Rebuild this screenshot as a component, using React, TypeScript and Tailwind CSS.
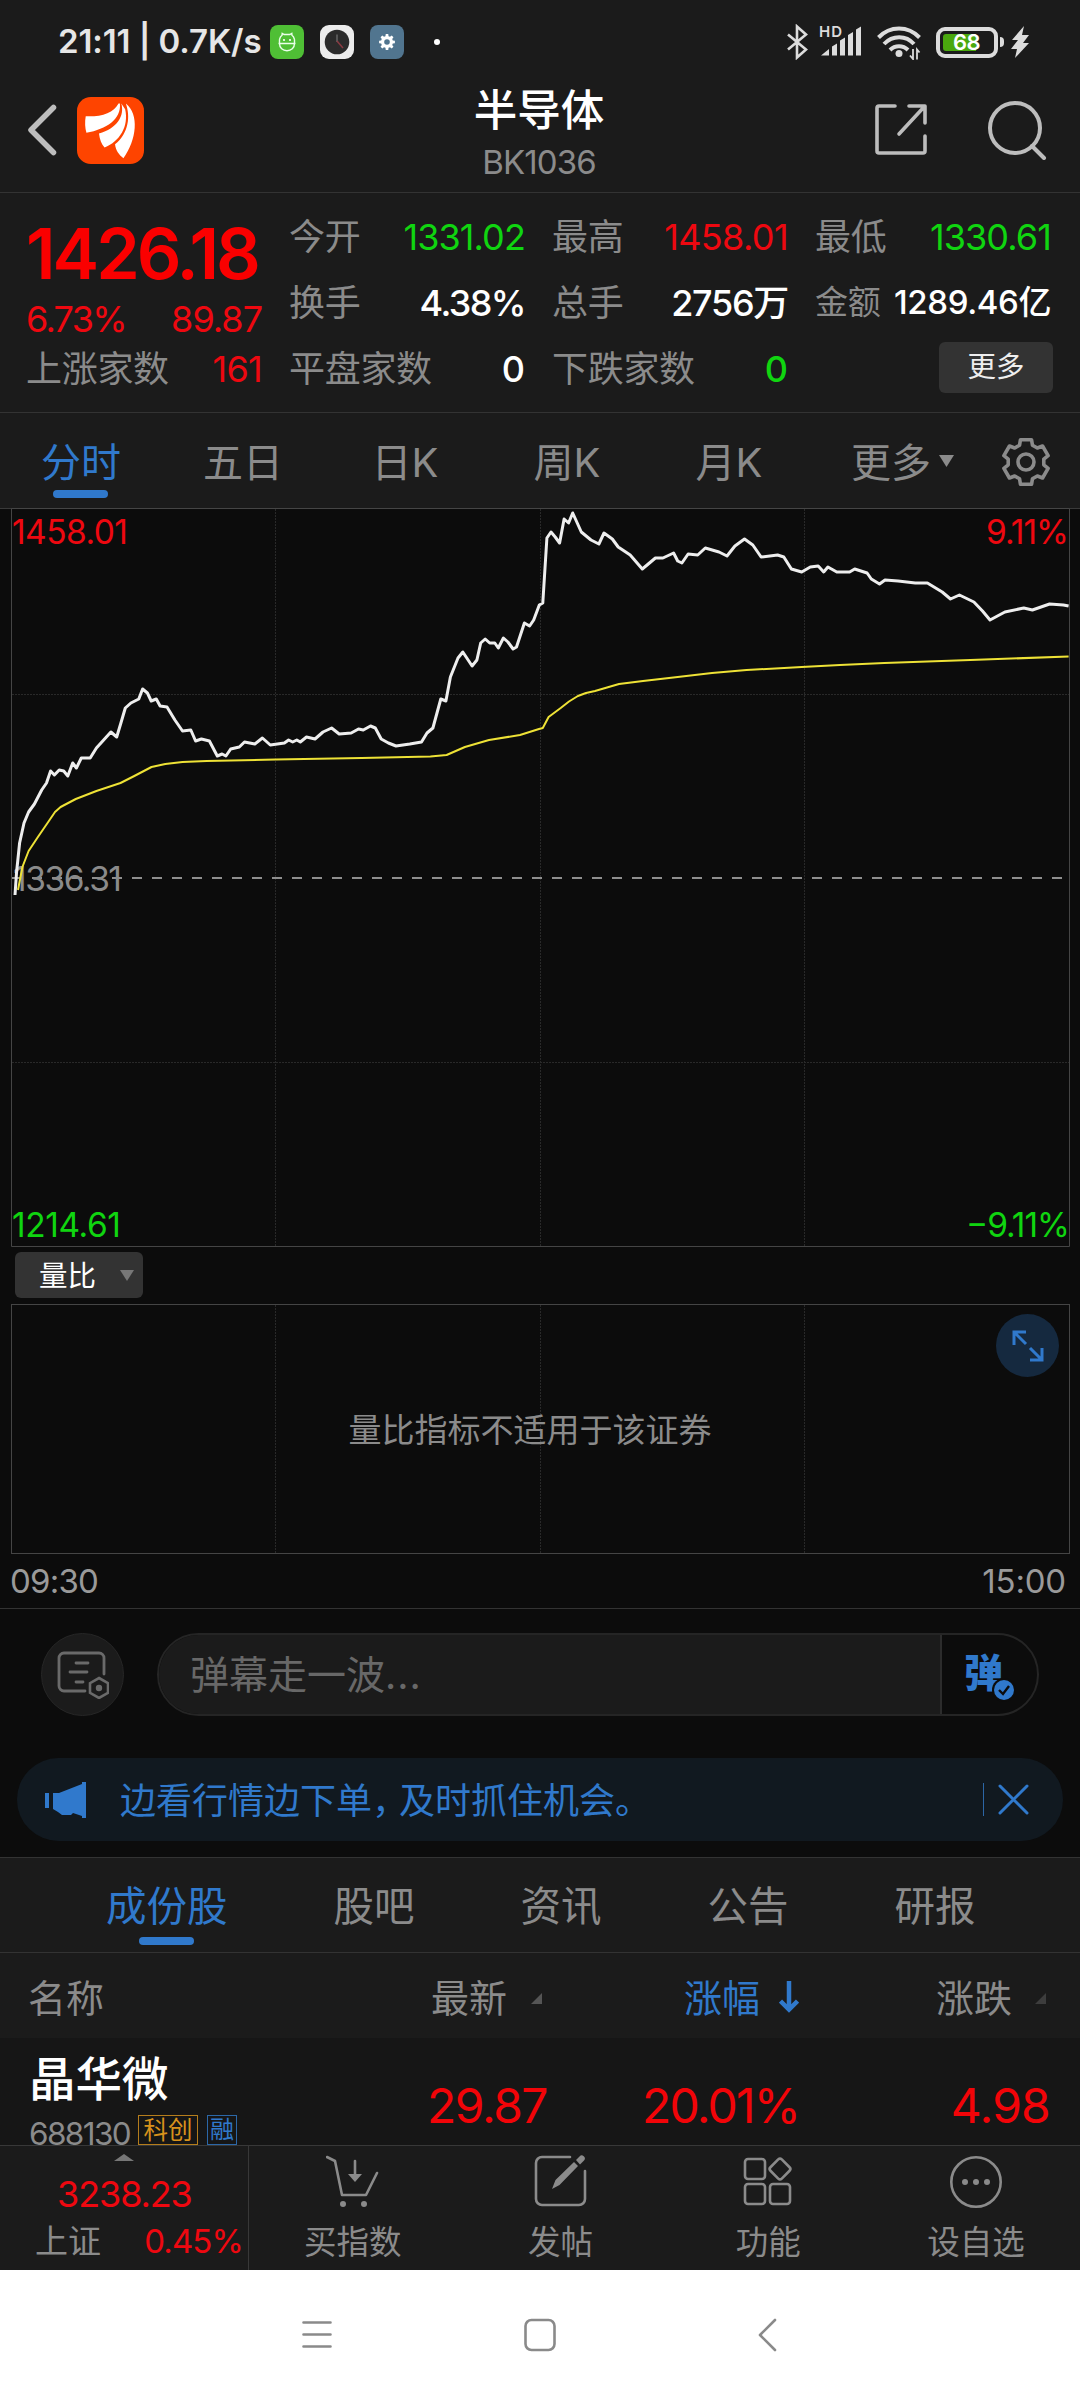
import React from 'react'
import clsx from 'clsx'

// Outline of a cog: outer radius r1 on the teeth, r2 in the valleys
const cogPath = (teeth: number, r1: number, r2: number, outer: number, inner: number) => {
  const pts: string[] = []
  for (let i = 0; i < teeth; i++) {
    const base = (360 / teeth) * i
    const steps: [number, number][] = [[-inner, r2], [-outer, r1], [outer, r1], [inner, r2]]
    steps.forEach(([deg, r]) => {
      const a = ((base + deg) * Math.PI) / 180
      pts.push(`${(Math.sin(a) * r).toFixed(2)} ${(-Math.cos(a) * r).toFixed(2)}`)
    })
  }
  return `M${pts.join('L')}Z`
}

const PRICE_LINE =
  '15,895 16.5,873 19.6,843 24,823 28.6,812 34.4,804 41.7,790 46.5,783 50.6,771 54.4,775 59.2,770 63.7,771 67.8,776 72.7,763 76.4,768 81.3,758 90.2,758 96.4,748 110.9,732 116.7,737 120.9,723 125.3,708 130.9,703 138.8,699 142.6,689 147.4,693 151.2,701 156.3,699 160.1,706 167,707 174.9,720 182.5,731 190.8,730 195.6,741 201.4,739 209.4,741 217.3,756 222.1,754 225.9,756 230.7,749 239.3,747 244.5,742 254.8,744 262.4,738 270.3,745 284.4,743 288.6,740 292.7,742 296.8,740 300.3,742 306.5,737 315,739 323,732 331.6,728 339.2,734 351.2,733 358.5,729 363.3,730 370.5,726 375.3,728 381.2,739 388.4,743 396,746 409.8,744 421.5,742 427,733 432.9,728 440.8,699 445.9,701 450.4,677 458,658 462.8,652 472.1,666 476.9,660 480.7,643 485.2,639 489.7,643 494.8,643 498.3,648 503.4,638 507.9,642 513.1,649 516.5,647 524.4,623 529.6,626 533.7,620 539.3,605 542.8,603 546.9,538 551,532 555.2,537 559.6,543 564.1,519 568.6,523 572.7,513 581.3,532 591,540 598.9,544 604,533 612.3,539 618.2,547 630.2,555 642.3,569 655.4,558 662.9,558 673.6,553 677.7,561 681.9,563 688.1,554 697.7,555 705.3,548 719,552 727,556 734.9,546 744.5,539 752.8,545 761.1,557 777.6,555 783.8,557 791.4,569 801.7,572 810.3,567 818.2,566 823.7,572 827.9,567 836.8,572 849.6,572 854.7,569 867.1,573 871.3,579 879.5,584 885,580 898.1,581 915.3,583 927.4,583 942.2,592 950.5,599 959.4,595 973.9,602 982.5,611 990,620 1004.9,612 1023.8,608 1032.4,610 1049.6,604 1063.4,605 1068.6,606'

const AVG_LINE =
  '18,890 22.4,867 28.6,851 37.9,837 48.2,822 55,812 60.6,807 75.8,799 96.4,791 120.5,783 134.3,776 151.5,767 165.3,764 182.5,762 206.6,761 275.5,759.5 361.6,758 430.4,756.5 446.6,755 464.9,747 489,740 520,735 539,729 542.8,728 548.6,717 560.7,708 569,701.5 577.9,696 586,693 595,691 607,687.5 619,684 631,682.5 643,681 677.7,677 712,673 746.6,670 801.7,667 840,665 884.4,663 970.4,660 1068.6,656.5'

// ---------- Status bar ----------
function StatusBar() {
  return (
    <div className="flex h-[84px] items-center pl-[58px] pr-[50px] text-[#e6e6e6]">
      <span className="w-[205px] whitespace-nowrap text-[33px] font-semibold tracking-[-0.1px]">21:11 | 0.7K/s</span>
      <svg className="ml-[7px] h-[34px] w-[34px]" viewBox="0 0 34 34" fill="none">
        <rect width="34" height="34" rx="8" fill="#4fbf35" />
        <path d="M9.5 14.5c.5-2 1.5-3.500 2.500-4.200l.2-2 2 1.200h5.600l2-1.200.2 2c1 .7 2 2.200 2.500 4.200M8.500 18.500h17M9.500 18.500c0 4.500 3.300 7.300 7.500 7.300s7.500-2.800 7.500-7.300v-4M9.500 18.500v-4" stroke="#eaffea" strokeWidth="1.400" />
        <circle cx="14" cy="15" r="1.100" fill="#fff" />
        <circle cx="20" cy="15" r="1.100" fill="#fff" />
      </svg>
      <svg className="ml-4 h-[34px] w-[34px]" viewBox="0 0 34 34" fill="none">
        <rect width="34" height="34" rx="9" fill="#ececec" />
        <circle cx="17" cy="17" r="12.300" fill="#2b2b2b" />
        <path d="M17 9.500V17" stroke="#666" strokeWidth="1.500" />
        <path d="M17 16l6 7" stroke="#8a3a42" strokeWidth="1.500" />
      </svg>
      <svg className="ml-4 h-[34px] w-[34px]" viewBox="-17 -17 34 34" fill="none">
        <rect x="-17" y="-17" width="34" height="34" rx="8" fill="#51758f" />
        <path d={cogPath(8, 8, 6, 9, 15)} fill="#fff" />
        <circle r="2.800" fill="#51758f" />
      </svg>
      <span className="ml-[30px] h-[6px] w-[6px] rounded-full bg-white" />

      <div className="ml-auto flex items-center">
        <svg className="h-9 w-[22px]" viewBox="0 0 22 36" fill="none" stroke="#dcdcdc" strokeWidth="2.600">
          <path d="M2 10.500L20 25.500L11 33.500V2.500L20 10.500L2 25.500" />
        </svg>
        <svg className="ml-[11px] h-9 w-[44px]" viewBox="0 0 44 36" fill="#dcdcdc">
          <text x="0" y="13" fontSize="15" fontWeight="600" textLength="23">HD</text>
          <path d="M2 31.500L10 25v6.500zM13 22.500l5-3v12h-5zM21 16.500l5-3v18h-5zM29 11l5-3v23.500h-5zM37 5.500l5-3v29h-5z" />
        </svg>
        <svg className="ml-[14px] h-9 w-[44px]" viewBox="0 0 44 36" fill="none" stroke="#dcdcdc" strokeWidth="4">
          <path d="M1.500 13.500C13 1.500 31 1.500 42.500 13.500M7 20c8.500-9 22-9 30 0M13 26c5-5 13-5 18 0" />
          <circle cx="22" cy="29.500" r="3.500" fill="#dcdcdc" stroke="none" />
          <path d="M36 25v10l-3-3.500M40 35.500v-10l2.500 3" strokeWidth="1.800" />
        </svg>
        <div className="ml-[15px] flex h-[31px] w-[62px] rounded-[9px] border-4 border-[#dcdcdc] p-[3px]">
          <div className="relative h-full w-[33px] rounded-l-[3px] bg-[#4aa80e]">
            <span className="absolute left-[10px] top-[-4px] text-[22px] font-semibold leading-6 tracking-[-0.5px] text-white">68</span>
          </div>
        </div>
        <span className="ml-[2px] h-[10px] w-[4px] rounded-r bg-[#dcdcdc]" />
        <svg className="ml-[7px] h-[32px] w-[19px]" viewBox="0 0 19 32" fill="#dcdcdc">
          <path d="M13 0L1 14h6L0 23h6L4 32 18 17h-6l6-8h-7z" />
        </svg>
      </div>
    </div>
  )
}

// ---------- Title bar ----------
function Header() {
  return (
    <header className="grid h-[109px] grid-cols-3 border-b border-[#333] pl-7 pr-[33px]">
      <div className="flex items-center gap-[20px] pb-4">
        <svg className="h-[52px] w-[29px]" viewBox="0 0 29 52" fill="none" stroke="#bdbdbd" strokeWidth="5.500" strokeLinecap="round" strokeLinejoin="round">
          <path d="M25.500 3.500L3 26l22.500 22.500" />
        </svg>
        <svg className="h-[67px] w-[67px]" viewBox="225 294 192 198" preserveAspectRatio="none">
          <rect x="225" y="294" width="192" height="198" rx="40" fill="#fe4400" />
          <path d="M344 313C330 341 295 353 250 351C247 368 248 386 252 400C310 388 352 360 348 313Z" fill="#fff" />
          <path d="M352 313C362 350 340 386 288 402C290 420 295 434 304 443C348 425 374 380 363 330Z" fill="#fff" />
          <path d="M365 313C378 350 374 400 334 434C336 452 345 465 358 475C396 420 404 345 365 313Z" fill="#fff" />
        </svg>
      </div>
      <div className="flex flex-col items-center pl-[3px] pt-px">
        <h1 className="text-[43.500px] font-medium leading-[50px] text-white">半导体</h1>
        <p className="text-[33px] leading-[55px] tracking-[-0.900px] text-[#8b8b8b]">BK1036</p>
      </div>
      <div className="flex items-center justify-end gap-[60px] pb-4">
        <svg className="h-[54px] w-[54px]" viewBox="0 0 54 54" fill="none" stroke="#bdbdbd" strokeWidth="3.600" strokeLinecap="round" strokeLinejoin="round">
          <path d="M21 3H5a2 2 0 0 0-2 2v43a2 2 0 0 0 2 2h44a2 2 0 0 0 2-2V33M35 3h16v17M50 4L25 31" />
        </svg>
        <svg className="h-[60px] w-[59px]" viewBox="0 0 59 60" fill="none" stroke="#bdbdbd" strokeWidth="4" strokeLinecap="round">
          <circle cx="27" cy="28" r="25" />
          <path d="M44 46l12 12" />
        </svg>
      </div>
    </header>
  )
}

// ---------- Quote ----------
type QuoteItem = { label: string; value: string; color: string; small?: boolean }

const quote: QuoteItem[] = [
  { label: '今开', value: '1331.02', color: 'text-[#10d510] tracking-[-0.900px]' },
  { label: '最高', value: '1458.01', color: 'text-[#ee0810] tracking-[-0.600px]' },
  { label: '最低', value: '1330.61', color: 'text-[#10d510] tracking-[-0.900px]' },
  { label: '换手', value: '4.38%', color: 'text-white font-medium tracking-[-1.600px]' },
  { label: '总手', value: '2756万', color: 'text-white font-medium tracking-[-1.300px]' },
  { label: '金额', value: '1289.46亿', color: 'text-white font-medium tracking-[-0.400px]', small: true },
  { label: '上涨家数', value: '161', color: 'text-[#ee0810] tracking-[-0.700px]' },
  { label: '平盘家数', value: '0', color: 'text-white font-medium' },
  { label: '下跌家数', value: '0', color: 'text-[#10d510] font-medium' },
]

function Quote() {
  return (
    <section className="grid h-[220px] grid-cols-4 grid-rows-[66px_66px_66px] gap-x-[27px] border-b border-[#333] pl-[26px] pr-[29px] pt-[11px]">
      <div className="row-span-2 whitespace-nowrap text-[#ee0810]">
        <div className="text-[70px] font-semibold leading-[100px] tracking-[-3px] text-[#fa0000]">1426.18</div>
        <div className="flex justify-between text-[36px] leading-[30px] tracking-[-1.700px]">
          <span>6.73%</span>
          <span className="tracking-[-1px]">89.87</span>
        </div>
      </div>
      {quote.map((q) => (
        <div key={q.label} className={clsx('flex items-center justify-between whitespace-nowrap', q.small ? 'text-[33px]' : 'text-[36px]')}>
          <span className="tracking-[-0.300px] text-[#8b8b8b]">{q.label}</span>
          <span className={q.color}>{q.value}</span>
        </div>
      ))}
      <div className="flex items-center justify-end pb-1">
        <button className="mr-[-2px] h-[51px] w-[114px] rounded-md bg-[#333] text-[28.500px] text-[#eee]">更多</button>
      </div>
    </section>
  )
}

const periods = ['分时', '五日', '日K', '周K', '月K']

function PeriodTabs() {
  return (
    <nav className="flex h-[95px] text-[40px] text-[#8b8b8b]">
      {periods.map((p, i) => (
        <div key={p} className={clsx('relative flex w-[162px] items-center justify-center pt-[5px]', i === 0 && 'text-[#3079cc]')}>
          {p}
          {i === 0 && <span className="absolute bottom-[10px] left-[53px] h-2 w-[55px] rounded-full bg-[#3079cc]" />}
        </div>
      ))}
      <div className="flex items-center gap-2 pl-[41px] pt-[5px]">
        更多
        <svg className="-mt-1 h-3 w-[15px]" viewBox="0 0 15 12" fill="#8b8b8b"><path d="M0 0h15L7.500 12z" /></svg>
      </div>
      <svg className="ml-auto mr-[29px] mt-[24px] h-[50px] w-[50px]" viewBox="-25 -25 50 50" fill="none" stroke="#8b8b8b" strokeWidth="3.600" strokeLinejoin="round">
        <path d={cogPath(6, 23, 18, 14, 21)} />
        <circle r="8" />
      </svg>
    </nav>
  )
}

// ---------- Charts ----------
function Charts() {
  return (
    <section className="bg-[#0c0c0c]">
      <svg className="block h-[740px] w-[1080px]" viewBox="0 508 1080 740" fill="none">
        <path d="M0 508.500H1080" stroke="#3a3a3a" />
        <path d="M11.500 508.500H1069.500V1246.500H11.500Z" stroke="#454545" />
        <path d="M275.500 509V1246M540.500 509V1246M804.500 509V1246M12 694.500H1069M12 1062.500H1069" stroke="#292929" strokeDasharray="2 1" />
        <path d="M12 878H1064" stroke="#8f8f8f" strokeWidth="2" strokeDasharray="10 10" />
        <g fontSize="33.500">
          <text x="12" y="544" fill="#ee0810" textLength="116">1458.01</text>
          <text x="986" y="544" fill="#ee0810" textLength="83">9.11%</text>
          <text x="13" y="891" fill="#8b8b8b" textLength="109">1336.31</text>
          <text x="12" y="1237" fill="#10d510" textLength="109">1214.61</text>
          <text x="966" y="1237" fill="#10d510" textLength="104">−9.11%</text>
        </g>
        <polyline points={AVG_LINE} stroke="#eee236" strokeWidth="2" strokeLinejoin="round" />
        <polyline points={PRICE_LINE} stroke="#eee" strokeWidth="3" strokeLinejoin="round" />
      </svg>

      <div className="flex h-[56px] pl-[15px] pt-1">
        <div className="flex h-[46px] w-[128px] items-center rounded-md bg-[#333] pl-6 pt-0.5 text-[28.500px] text-white">
          量比
          <svg className="-mt-0.5 ml-[24px] h-[11px] w-[14px]" viewBox="0 0 14 11" fill="#777"><path d="M0 0h14L7 11z" /></svg>
        </div>
      </div>

      <div className="relative mx-[11px] h-[250px] w-[1059px] border border-[#454545]">
        <svg className="absolute inset-0" width="1057" height="248" viewBox="12 1305 1057 248" stroke="#292929" strokeDasharray="2 1">
          <path d="M275.500 1305V1553M540.500 1305V1553M804.500 1305V1553" />
        </svg>
        <p className="absolute left-0 top-[99px] w-[1036px] text-center text-[33px] leading-[52px] text-[#8b8b8b]">量比指标不适用于该证券</p>
        <div className="absolute right-[10px] top-[9px] flex h-[63px] w-[63px] items-center justify-center rounded-full bg-[#15293f]">
          <svg className="h-8 w-8" viewBox="0 0 32 32" fill="none" stroke="#3079cc" strokeWidth="3">
            <path d="M2 15V2h12M2.500 2.500L14 14M30 18v12H18M29.500 29.500L18 18" />
          </svg>
        </div>
      </div>

      <div className="flex h-[55px] items-center justify-between border-b border-[#333] pl-[10px] pr-[14px] pt-0.5 text-[33px] tracking-[-0.800px] text-[#9a9a9a]">
        <span>09:30</span>
        <span className="tracking-[-0.200px]">15:00</span>
      </div>
    </section>
  )
}

// ---------- Danmaku input and trade hint ----------
function Danmaku() {
  return (
    <section className="h-[249px] border-b border-[#333] bg-[#0c0c0c] pt-6">
      <div className="flex pl-[41px]">
        <div className="flex h-[83px] w-[83px] items-center justify-center rounded-full border border-[#262626] bg-[#1b1b1b]">
          <svg className="h-[48px] w-[52px]" viewBox="0 0 52 48" fill="none" stroke="#6a6a6a" strokeWidth="2.800" strokeLinecap="round">
            <path d="M28 39H7a5 5 0 0 1-5-5V6a5 5 0 0 1 5-5h35a5 5 0 0 1 5 5v16M19 11h12M13 20h17M19 30h7" transform="translate(0 1)" />
            <path d="M42 27l9 5.200v9.600L42 47l-9-5.200v-9.600z" strokeWidth="2.600" />
            <circle cx="42" cy="37" r="1.800" fill="#6a6a6a" />
          </svg>
        </div>
        <div className="ml-[33px] flex h-[83px] w-[882px] overflow-hidden rounded-full border-2 border-[#252525]">
          <div className="flex w-[783px] items-center border-r-2 border-[#2c2c2c] bg-[#1b1b1b] pl-[31px] pt-0.5 text-[39px] text-[#686868]">
            弹幕走一波<span className="tracking-[1px]">...</span>
          </div>
          <div className="relative flex-1 pl-[22px] pt-[16px] text-[39px] font-black leading-[44px] text-[#3079cc]">
            弹
            <svg className="absolute left-[50px] top-[43px] h-6 w-6" viewBox="0 0 24 24" fill="none">
              <circle cx="12" cy="12" r="12" fill="#0c0c0c" />
              <circle cx="12" cy="12" r="10" fill="#3079cc" />
              <path d="M7 12l4 4 6-8" stroke="#0c0c0c" strokeWidth="2.400" />
            </svg>
          </div>
        </div>
      </div>

      <div className="mx-[17px] mt-[42px] flex h-[83px] items-center rounded-full bg-[#111920] text-[#3079cc]">
        <svg className="ml-7 h-9 w-[42px]" viewBox="0 0 42 36" fill="#3079cc">
          <path d="M0 11h4v15H0zM8 11h6L37 2V0h4v36h-4v-2l-9-3-2 2h-9l-4-3-5-3z" />
        </svg>
        <p className="ml-[33px] whitespace-nowrap pt-0.5 text-[36px]">
          边看行情边下单<span className="tracking-[-9px]">，</span>及时抓住机会。
        </p>
        <span className="ml-auto h-[33px] w-[1.500px] bg-[#2c66a6]" />
        <svg className="ml-[14px] mr-[34px] h-[31px] w-[31px]" viewBox="0 0 31 31" stroke="#3079cc" strokeWidth="3" strokeLinecap="round">
          <path d="M2 2l27 27M29 2L2 29" />
        </svg>
      </div>
    </section>
  )
}

// ---------- Constituents ----------
const sections = ['成份股', '股吧', '资讯', '公告', '研报']

function SortMark({ className }: { className?: string }) {
  return (
    <svg className={clsx('h-[11px] w-[11px]', className)} viewBox="0 0 11 11" fill="currentColor">
      <path d="M11 0v11H0z" />
    </svg>
  )
}

function Constituents() {
  return (
    <section>
      <nav className="flex h-[95px] items-center gap-[106px] border-b border-[#333] pl-[106px] pt-[5px] text-[40.500px] text-[#8b8b8b]">
        {sections.map((s, i) => (
          <div key={s} className={clsx('relative whitespace-nowrap', i === 0 && 'text-[#3079cc]')}>
            {s}
            {i === 0 && <span className="absolute -bottom-[7px] left-[33px] h-2 w-[55px] rounded-full bg-[#3079cc]" />}
          </div>
        ))}
      </nav>
      <div className="flex h-[85px] items-center pl-[28px] pt-[5px] text-[38px] text-[#8b8b8b]">
        <span className="w-[403px]">名称</span>
        <span>最新</span>
        <SortMark className="ml-[24px] text-[#555]" />
        <span className="ml-auto flex items-center text-[#3079cc]">
          涨幅
          <svg className="-mt-[3px] ml-[19px] h-8 w-5" viewBox="0 0 20 32" fill="none" stroke="#3079cc" strokeWidth="4.500">
            <path d="M10 0v28M1.500 20l8.500 8.500 8.500-8.500" />
          </svg>
        </span>
        <span className="ml-[137px]">涨跌</span>
        <SortMark className="ml-[23px] mr-[34px] text-[#3d3d3d]" />
      </div>
      <div className="flex h-[107px] overflow-hidden bg-[#161616]">
        <div className="w-[398px] pl-[29px] pt-[11px]">
          <p className="text-[46.500px] font-medium leading-[60px] text-white">晶华微</p>
          <div className="flex items-start pt-[6px]">
            <span className="w-[109px] text-[31.500px] leading-[38px] tracking-[-1.600px] text-[#8b8b8b]">688130</span>
            <span className="flex h-[30px] w-[60px] items-center justify-center border border-[#b57d1c] text-[24.500px] text-[#d8921c]">科创</span>
            <span className="ml-[9px] flex h-[30px] w-[30px] items-center justify-center border border-[#2b67a8] text-[24px] text-[#3079cc]">融</span>
          </div>
        </div>
        <div className="flex flex-1 items-center pr-[30px] pt-[29px] text-[48px] leading-[50px] tracking-[-1.500px] text-[#f20408]">
          <span className="w-[149px] text-right">29.87</span>
          <span className="w-[252px] text-right tracking-[-1.800px]">20.01%</span>
          <span className="flex-1 text-right tracking-[-0.800px]">4.98</span>
        </div>
      </div>
    </section>
  )
}

// ---------- Bottom action bar ----------
const actions = [
  {
    label: '买指数',
    icon: (
      <>
        <path d="M1 2l8 4 7 34h24l11-22M29 6v18" />
        <path d="M22 19h14l-7 8z" fill="#8b8b8b" stroke="none" />
        <circle cx="17" cy="49" r="3" fill="#8b8b8b" stroke="none" />
        <circle cx="38" cy="49" r="3" fill="#8b8b8b" stroke="none" />
      </>
    ),
  },
  {
    label: '发帖',
    icon: (
      <>
        <path d="M36 2H8a6 6 0 0 0-6 6v36a6 6 0 0 0 6 6h37a6 6 0 0 0 6-6V16" />
        <path d="M18 34l3.500-9L40 7l4 4-18.500 19zM42 5l3.500-3.500a3 3 0 0 1 4.500 4L46 9.500z" fill="#8b8b8b" stroke="none" />
      </>
    ),
  },
  {
    label: '功能',
    icon: (
      <>
        <rect x="4" y="4" width="20" height="20" rx="3" />
        <rect x="4" y="29" width="20" height="20" rx="3" />
        <rect x="29" y="29" width="20" height="20" rx="3" />
        <rect x="31" y="6" width="16" height="16" rx="2.500" transform="rotate(45 39 14)" />
      </>
    ),
  },
  {
    label: '设自选',
    icon: (
      <>
        <circle cx="27" cy="27" r="24.700" />
        <g fill="#8b8b8b" stroke="none">
          <circle cx="16" cy="27" r="3" />
          <circle cx="27" cy="27" r="3" />
          <circle cx="38" cy="27" r="3" />
        </g>
      </>
    ),
  },
]

function BottomBar() {
  return (
    <footer className="flex h-[125px] border-t border-[#383838]">
      <div className="w-[249px] border-r border-[#383838] pt-2">
        <svg className="ml-[114px] h-[7px] w-5" viewBox="0 0 20 7" fill="#777"><path d="M10 0l10 7H0z" /></svg>
        <div className="pl-[57px] pt-[8px] text-[36px] leading-[50px] tracking-[-1.100px] text-[#ee0810]">3238.23</div>
        <div className="flex justify-between pl-[35px] pr-[5px] text-[33px] leading-[44px]">
          <span className="text-[#8b8b8b]">上证</span>
          <span className="tracking-[-0.900px] text-[#ee0810]">0.45%</span>
        </div>
      </div>
      <div className="grid flex-1 grid-cols-4">
        {actions.map((a) => (
          <div key={a.label} className="flex flex-col items-center pt-[9px] text-[32.500px] leading-[54px] text-[#8b8b8b]">
            <svg className="mb-[7px] h-[54px] w-[54px]" viewBox="0 0 54 54" fill="none" stroke="#8b8b8b" strokeWidth="2.600" strokeLinecap="round" strokeLinejoin="round">
              {a.icon}
            </svg>
            <span>{a.label}</span>
          </div>
        ))}
      </div>
    </footer>
  )
}

function SystemNav() {
  return (
    <div className="flex h-[130px] items-center bg-white pl-[302px]">
      <svg className="h-[34px] w-[480px]" viewBox="302 2318 480 34" fill="none" stroke="#8a8a8a" strokeWidth="2.600" strokeLinecap="round">
        <path d="M303.500 2322.500H330.500M303.500 2334.500H330.500M303.500 2346.500H330.500" />
        <rect x="525.500" y="2320" width="29" height="30" rx="6" />
        <path d="M775 2320l-15 15 15 15" strokeLinejoin="round" />
      </svg>
    </div>
  )
}

export default function App() {
  return (
    <main className="h-[2400px] w-[1080px] overflow-hidden bg-[#1b1b1b] font-[Inter,'Noto_Sans_CJK_SC',sans-serif]">
      <StatusBar />
      <Header />
      <Quote />
      <PeriodTabs />
      <Charts />
      <Danmaku />
      <Constituents />
      <BottomBar />
      <SystemNav />
    </main>
  )
}
